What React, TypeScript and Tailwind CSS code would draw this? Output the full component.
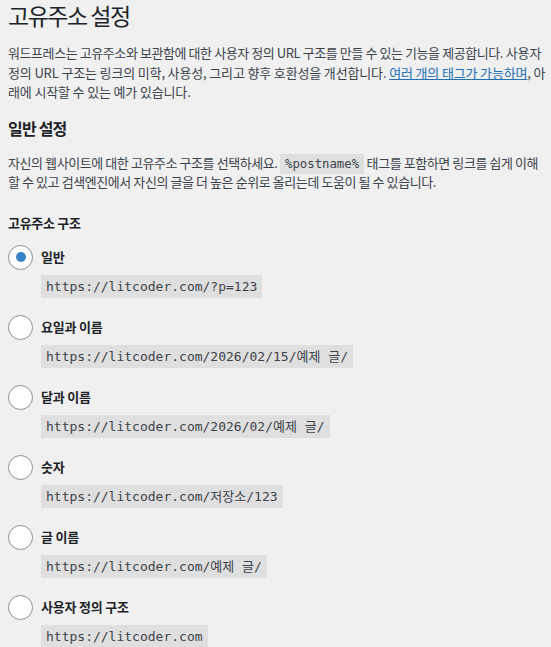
import React, { useState } from "react";

const options = [
  { id: "plain", label: "일반", example: "https://litcoder.com/?p=123" },
  { id: "day", label: "요일과 이름", example: "https://litcoder.com/2026/02/15/예제 글/" },
  { id: "month", label: "달과 이름", example: "https://litcoder.com/2026/02/예제 글/" },
  { id: "numeric", label: "숫자", example: "https://litcoder.com/저장소/123" },
  { id: "postname", label: "글 이름", example: "https://litcoder.com/예제 글/" },
  { id: "custom", label: "사용자 정의 구조", example: "https://litcoder.com" },
];

const mono = "font-['DejaVu_Sans_Mono','Noto_Sans_CJK_KR',monospace] tracking-normal";

const App: React.FC = () => {
  const [selected, setSelected] = useState("plain");

  return (
    <div className="min-h-[647px] bg-[#f0f0f1] pl-2 pr-[5px] text-[#3c434a] font-['Noto_Sans_CJK_KR','Noto_Sans',sans-serif] text-[13px]">
      <h1 className="pt-px text-[23px] leading-[29px] font-normal tracking-[-1.5px] text-[#1d2327]">고유주소 설정</h1>

      <p className="mt-[13px] leading-[19.5px] tracking-[-0.42px]">
        워드프레스는 고유주소와 보관함에 대한 사용자 정의 URL 구조를 만들 수 있는 기능을 제공합니다.
        <span className="tracking-[-0.15px]">
          {" "}
          사용자 정의 URL 구조는 링크의 미학, 사용성, 그리고 향후 호환성을 개선합니다.{" "}
          <a href="#" className="text-[#2271b1] underline">
            여러 개의 태그가 가능하며
          </a>
          , 아래에 시작할 수 있는 예가 있습니다.
        </span>
      </p>

      <h2 className="mt-[15px] text-[16px] leading-[22px] font-semibold tracking-[-0.8px] text-[#1d2327]">일반 설정</h2>

      <p className="mt-[14px] leading-[19.5px] tracking-[-0.42px]">
        자신의 웹사이트에 대한 고유주소 구조를 선택하세요.{" "}
        <code
          className={`${mono} bg-black/[0.07] px-[5px] py-[3px] text-[12.3px] leading-none text-[#3c434a]`}
        >
          %postname%
        </code>{" "}
        태그를 포함하면 링크를 쉽게 이해할 수 있고 검색엔진에서 자신의 글을 더 높은 순위로 올리는데 도움이 될 수
        있습니다.
      </p>

      <h3 className="mt-[21px] text-[13px] leading-[20px] font-semibold tracking-[-0.3px] text-[#1d2327]">
        고유주소 구조
      </h3>

      <div className="mt-[12px] flex flex-col gap-[17px]">
        {options.map((opt) => (
          <div key={opt.id} className="flex flex-col gap-[5px]">
            <label className="flex items-center gap-2 cursor-pointer" onClick={() => setSelected(opt.id)}>
              <span className="w-[25px] h-[25px] rounded-full border border-[#8c8f94] bg-white flex items-center justify-center shrink-0">
                {selected === opt.id && <span className="w-[10px] h-[10px] rounded-full bg-[#3582c4]" />}
              </span>
              <span className="text-[13px] font-semibold tracking-[-0.2px] text-[#1d2327]">{opt.label}</span>
            </label>
            <div className="pl-[33px]">
              <code
                className={`${mono} inline-block h-[23px] leading-[23px] bg-black/[0.07] px-[5px] text-[13px] text-[#3c434a]`}
              >
                {opt.example}
              </code>
            </div>
          </div>
        ))}
      </div>
    </div>
  );
};

export default App;
